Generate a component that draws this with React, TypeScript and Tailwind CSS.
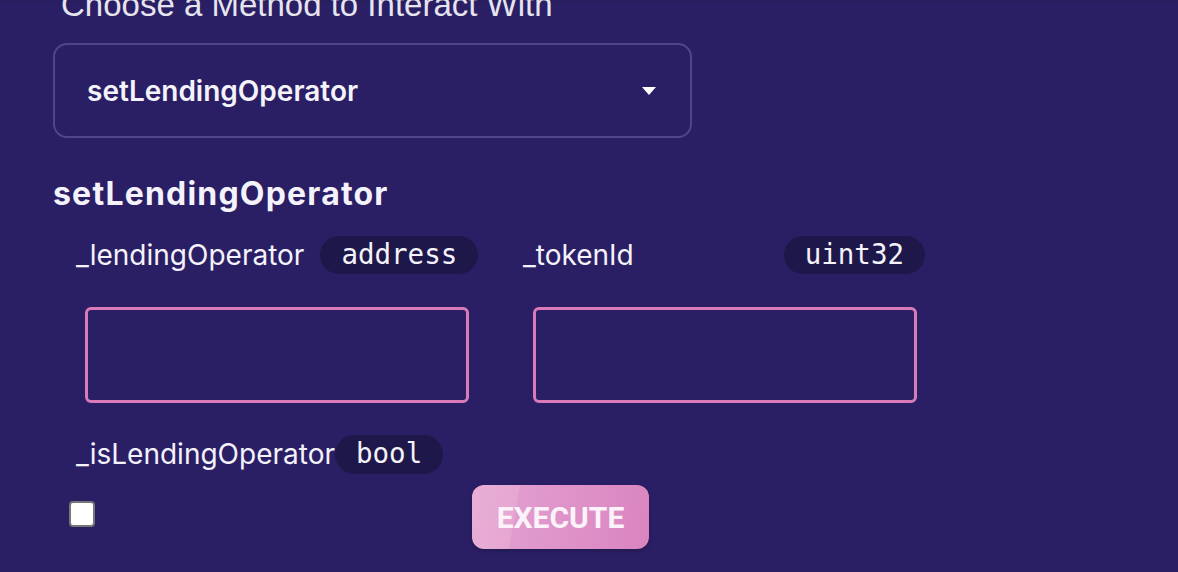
export default function App() {
  return (
    <div className="min-h-screen bg-[#2a1f64] font-['Inter',sans-serif] text-[#f4f2fa]">
      <div className="h-1 bg-[#2c2169]" />
      <div className="bg-[linear-gradient(#211a52,#2a1f64_18px)] pl-[53px] pb-6">
        <p className="-mt-[17px] ml-[8px] font-['Liberation_Sans',sans-serif] text-[33px] leading-[36px] text-[#e6e4ef]">
          Choose a Method to Interact With
        </p>

        <div className="mt-[20px] flex h-[95px] w-[639px] items-center justify-between rounded-[14px] border-2 border-[#4d4688] pl-[32px] pr-[34px]">
          <span className="text-[28px] font-semibold">setLendingOperator</span>
          <svg width="14" height="8" viewBox="0 0 14 8">
            <path d="M0 0h14L7 8z" fill="#ffffff" />
          </svg>
        </div>

        <h2 className="mt-[36px] text-[32px] font-bold leading-[40px] tracking-[1.2px]">setLendingOperator</h2>

        <div className="mt-[20px] flex gap-[46px] pl-[23px]">
          <div className="flex w-[401px] flex-col">
            <div className="flex items-center gap-4">
              <span className="text-[28px]">_lendingOperator</span>
              <span className="flex h-[38px] items-center rounded-full bg-[#1e1749] px-[21px] font-['DejaVu_Sans_Mono',monospace] text-[27.5px]">
                address
              </span>
            </div>
            <div className="ml-[9px] mt-[31px] h-[96px] w-[384px] rounded-[6px] border-[3px] border-[#da7bb9]" />
          </div>
          <div className="flex w-[402px] flex-col">
            <div className="flex items-center justify-between">
              <span className="text-[28px]">_tokenId</span>
              <span className="flex h-[38px] items-center rounded-full bg-[#1e1749] px-[21px] font-['DejaVu_Sans_Mono',monospace] text-[27.5px]">
                uint32
              </span>
            </div>
            <div className="ml-[10px] mt-[31px] h-[96px] w-[384px] rounded-[6px] border-[3px] border-[#da7bb9]" />
          </div>
        </div>

        <div className="mt-[30px] flex items-center pl-[23px]">
          <span className="text-[28px]">_isLendingOperator</span>
          <span className="flex h-[39px] items-center rounded-full bg-[#1e1749] px-[21px] font-['DejaVu_Sans_Mono',monospace] text-[27.5px]">
            bool
          </span>
        </div>

        <div className="mt-[10px] flex items-start">
          <div className="ml-[16px] mt-[16px] h-[26px] w-[26px] rounded-[4px] border-2 border-[#767676] bg-white" />
          <button className="ml-[377px] h-[64px] w-[177px] rounded-[12px] bg-[linear-gradient(100deg,#e8afd6_0%,#e6a6d2_25%,#e19cce_26%,#da84bf_100%)] font-['Roboto',sans-serif] text-[30px] font-bold text-[#fbf3f9] shadow-[0_2px_4px_rgba(0,0,0,0.2)]">
            EXECUTE
          </button>
        </div>
      </div>
    </div>
  );
}
